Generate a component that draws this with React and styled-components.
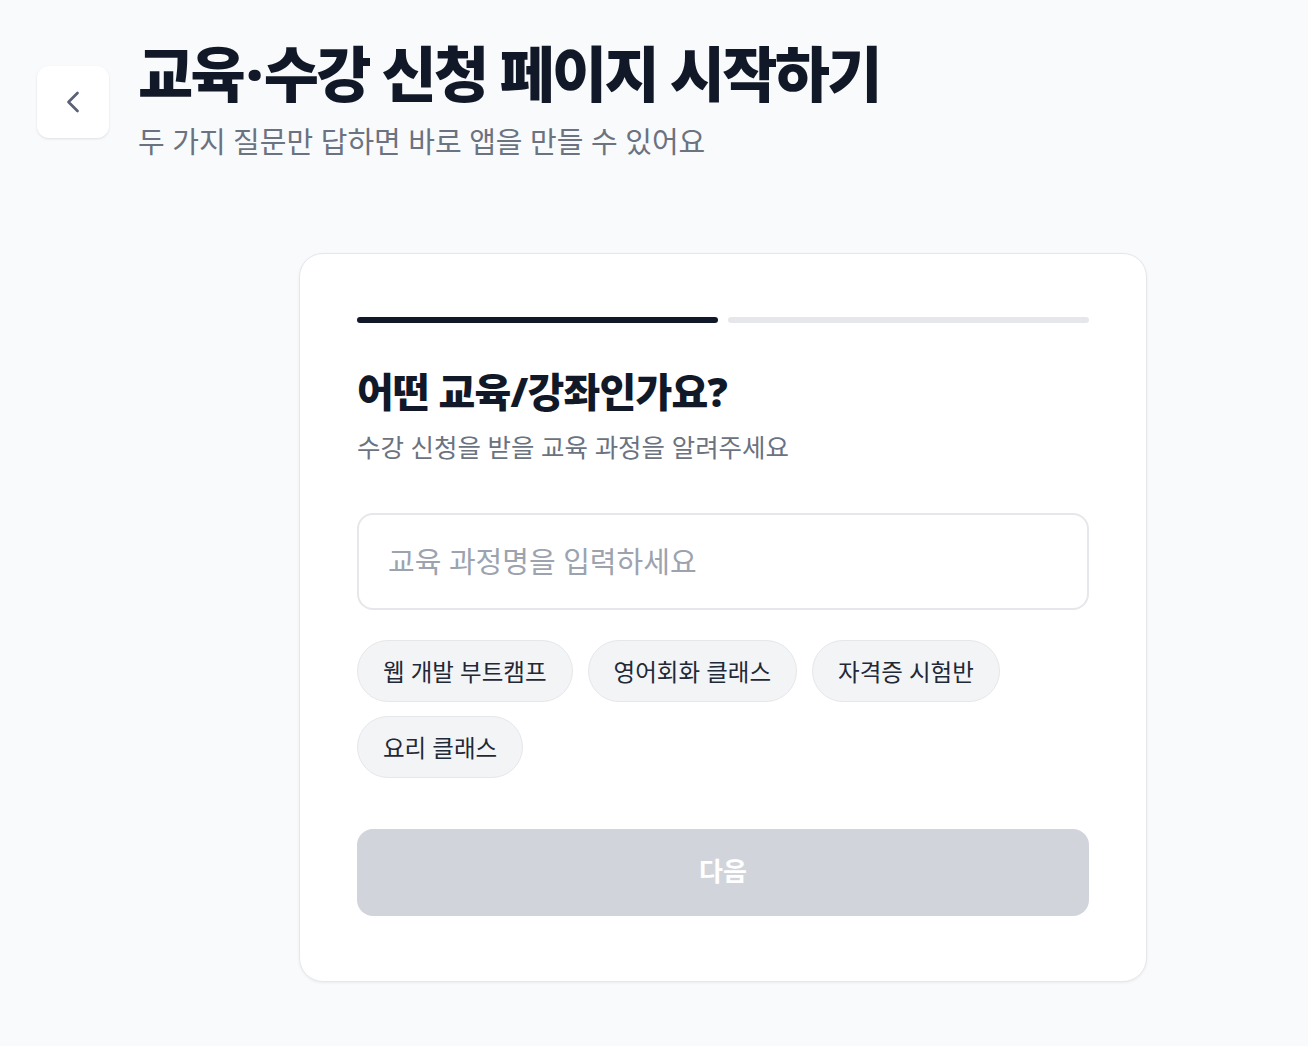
import React, { useState } from "react";
import styled, { createGlobalStyle } from "styled-components";

const GlobalStyle = createGlobalStyle`
  * { box-sizing: border-box; }
  html, body {
    margin: 0;
    padding: 0;
    background: #f9fafb;
    font-family: "Noto Sans", "Noto Sans CJK KR", "Liberation Sans", sans-serif;
    color: #111827;
  }
`;

const Page = styled.div`
  min-height: 1046px;
  display: flex;
  align-items: flex-start;
  gap: 29px;
  padding: 36px 0 0 37px;
`;

const BackButton = styled.button`
  flex: none;
  width: 72px;
  height: 72px;
  margin-top: 30px;
  border: none;
  border-radius: 12px;
  background: #ffffff;
  box-shadow: 0 1px 3px rgba(17, 24, 39, 0.08), 0 1px 2px rgba(17, 24, 39, 0.04);
  display: flex;
  align-items: center;
  justify-content: center;
  color: #5b6275;
  cursor: pointer;
`;

const Main = styled.div`
  flex: 1;
  display: flex;
  flex-direction: column;
`;

const Title = styled.h1`
  margin: 0;
  font-size: 60px;
  line-height: 76px;
  font-weight: 900;
  letter-spacing: -0.045em;
  color: #111827;
`;

const Dot = styled.span`
  margin: 0 3px;
`;

const Subtitle = styled.p`
  margin: 12px 0 0;
  font-size: 29px;
  line-height: 36px;
  color: #6b7280;
`;

const Card = styled.section`
  width: 848px;
  margin: 93px auto 0;
  padding: 63px 57px 65px;
  background: #ffffff;
  border: 1px solid #e5e7eb;
  border-radius: 24px;
  box-shadow: 0 1px 3px rgba(17, 24, 39, 0.06);
`;

const Progress = styled.div`
  display: flex;
  gap: 10px;
`;

const Step = styled.div`
  flex: 1;
  height: 6px;
  border-radius: 3px;
  background: ${(p) => (p.$active ? "#111827" : "#e5e7eb")};
`;

const Question = styled.h2`
  margin: 43px 0 0;
  font-size: 40px;
  line-height: 52px;
  font-weight: 900;
  letter-spacing: -0.02em;
  color: #111827;
`;

const Hint = styled.p`
  margin: 13px 0 0;
  font-size: 25.5px;
  line-height: 32px;
  color: #6b7280;
`;

const Input = styled.input`
  display: block;
  width: 100%;
  height: 97px;
  margin-top: 50px;
  padding: 0 29px;
  border: 2px solid #e5e7eb;
  border-radius: 16px;
  font-family: inherit;
  font-size: 29px;
  color: #111827;
  outline: none;
  &::placeholder {
    color: #9ca3af;
  }
`;

const Chips = styled.div`
  display: flex;
  flex-wrap: wrap;
  gap: 14px 15px;
  margin-top: 30px;
`;

const Chip = styled.button`
  height: 62px;
  padding: 0 25px;
  border: 1px solid #e5e7eb;
  border-radius: 999px;
  background: #f3f4f6;
  font-family: inherit;
  font-size: 23.5px;
  color: #1f2937;
  cursor: pointer;
`;

const NextButton = styled.button`
  display: block;
  width: 100%;
  height: 87px;
  margin-top: 51px;
  padding: 0 0 5px;
  border: none;
  border-radius: 16px;
  background: #d1d5db;
  color: #ffffff;
  font-family: inherit;
  font-size: 26px;
  font-weight: 700;
  cursor: not-allowed;
`;

const chips = ["웹 개발 부트캠프", "영어회화 클래스", "자격증 시험반", "요리 클래스"];

export default function App() {
  const [value, setValue] = useState("");
  return (
    <>
      <GlobalStyle />
      <Page>
        <BackButton aria-label="뒤로">
          <svg width="36" height="36" viewBox="0 0 24 24" fill="none" stroke="currentColor" strokeWidth="1.8" strokeLinecap="round" strokeLinejoin="round">
            <path d="M15 18l-6-6 6-6" />
          </svg>
        </BackButton>
        <Main>
          <Title>
            교육<Dot>·</Dot>수강 신청 페이지 시작하기
          </Title>
          <Subtitle>두 가지 질문만 답하면 바로 앱을 만들 수 있어요</Subtitle>
          <Card>
            <Progress>
              <Step $active />
              <Step />
            </Progress>
            <Question>어떤 교육/강좌인가요?</Question>
            <Hint>수강 신청을 받을 교육 과정을 알려주세요</Hint>
            <Input
              value={value}
              onChange={(e) => setValue(e.target.value)}
              placeholder="교육 과정명을 입력하세요"
            />
            <Chips>
              {chips.map((c) => (
                <Chip key={c} onClick={() => setValue(c)}>
                  {c}
                </Chip>
              ))}
            </Chips>
            <NextButton disabled={!value}>다음</NextButton>
          </Card>
        </Main>
      </Page>
    </>
  );
}
